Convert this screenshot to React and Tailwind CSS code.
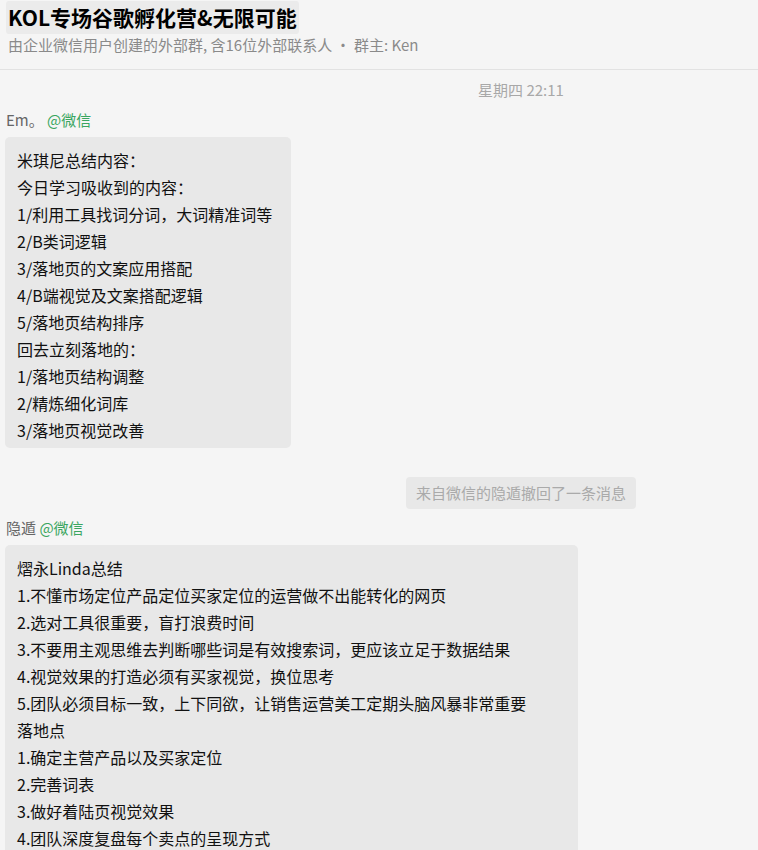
const font = { fontFamily: '"Noto Sans CJK SC", "Noto Sans", sans-serif' };

const first = [
  "米琪尼总结内容：",
  "今日学习吸收到的内容：",
  "1/利用工具找词分词，大词精准词等",
  "2/B类词逻辑",
  "3/落地页的文案应用搭配",
  "4/B端视觉及文案搭配逻辑",
  "5/落地页结构排序",
  "回去立刻落地的：",
  "1/落地页结构调整",
  "2/精炼细化词库",
  "3/落地页视觉改善",
];

const second = [
  "熠永Linda总结",
  "1.不懂市场定位产品定位买家定位的运营做不出能转化的网页",
  "2.选对工具很重要，盲打浪费时间",
  "3.不要用主观思维去判断哪些词是有效搜索词，更应该立足于数据结果",
  "4.视觉效果的打造必须有买家视觉，换位思考",
  "5.团队必须目标一致，上下同欲，让销售运营美工定期头脑风暴非常重要",
  "落地点",
  "1.确定主营产品以及买家定位",
  "2.完善词表",
  "3.做好着陆页视觉效果",
  "4.团队深度复盘每个卖点的呈现方式",
];

function Sender({ name }) {
  return (
    <div className="text-[15px] leading-[20px] text-[#666] px-[6px]">
      {name} <span className="text-[#3aa660]">@微信</span>
    </div>
  );
}

function Bubble({ lines, width }) {
  return (
    <div className={`ml-[5px] ${width} bg-[#e8e8e8] rounded-[5px] pl-[12px] pt-[10px] pb-[4px]`}>
      {lines.map((l, i) => (
        <div key={i} className="text-[16px] leading-[27px] text-[#111] whitespace-nowrap">{l}</div>
      ))}
    </div>
  );
}

export default function App() {
  return (
    <div className="w-[758px] h-[850px] overflow-hidden bg-[#f5f5f5]" style={font}>
      <div className="h-[70px] border-b border-[#e2e2e2] pt-[1px]">
        <div className="ml-[6px] inline-block bg-[#ebebeb] rounded-[3px] px-[2px] h-[33px] text-[21px] leading-[33px] font-bold text-black">
          KOL专场谷歌孵化营&amp;无限可能
        </div>
        <div className="ml-[8px] mt-[1px] text-[15px] leading-[20px] text-[#8a8a8a]">
          由企业微信用户创建的外部群, 含16位外部联系人 · 群主: Ken
        </div>
      </div>

      <div className="ml-[406px] w-[230px] text-center mt-[10px] text-[15px] leading-[20px] text-[#a8a8a8]">星期四 22:11</div>

      <div className="mt-[10px]">
        <Sender name="Em。" />
      </div>
      <div className="mt-[7px]">
        <Bubble lines={first} width="w-[286px]" />
      </div>

      <div className="ml-[406px] mt-[29px] w-[230px] h-[32px] bg-[#e8e8e8] rounded-[4px] text-center text-[15px] leading-[32px] text-[#aaa]">
        来自微信的隐遁撤回了一条消息
      </div>

      <div className="mt-[9px]">
        <Sender name="隐遁" />
      </div>
      <div className="mt-[7px]">
        <Bubble lines={second} width="w-[573px]" />
      </div>
    </div>
  );
}
